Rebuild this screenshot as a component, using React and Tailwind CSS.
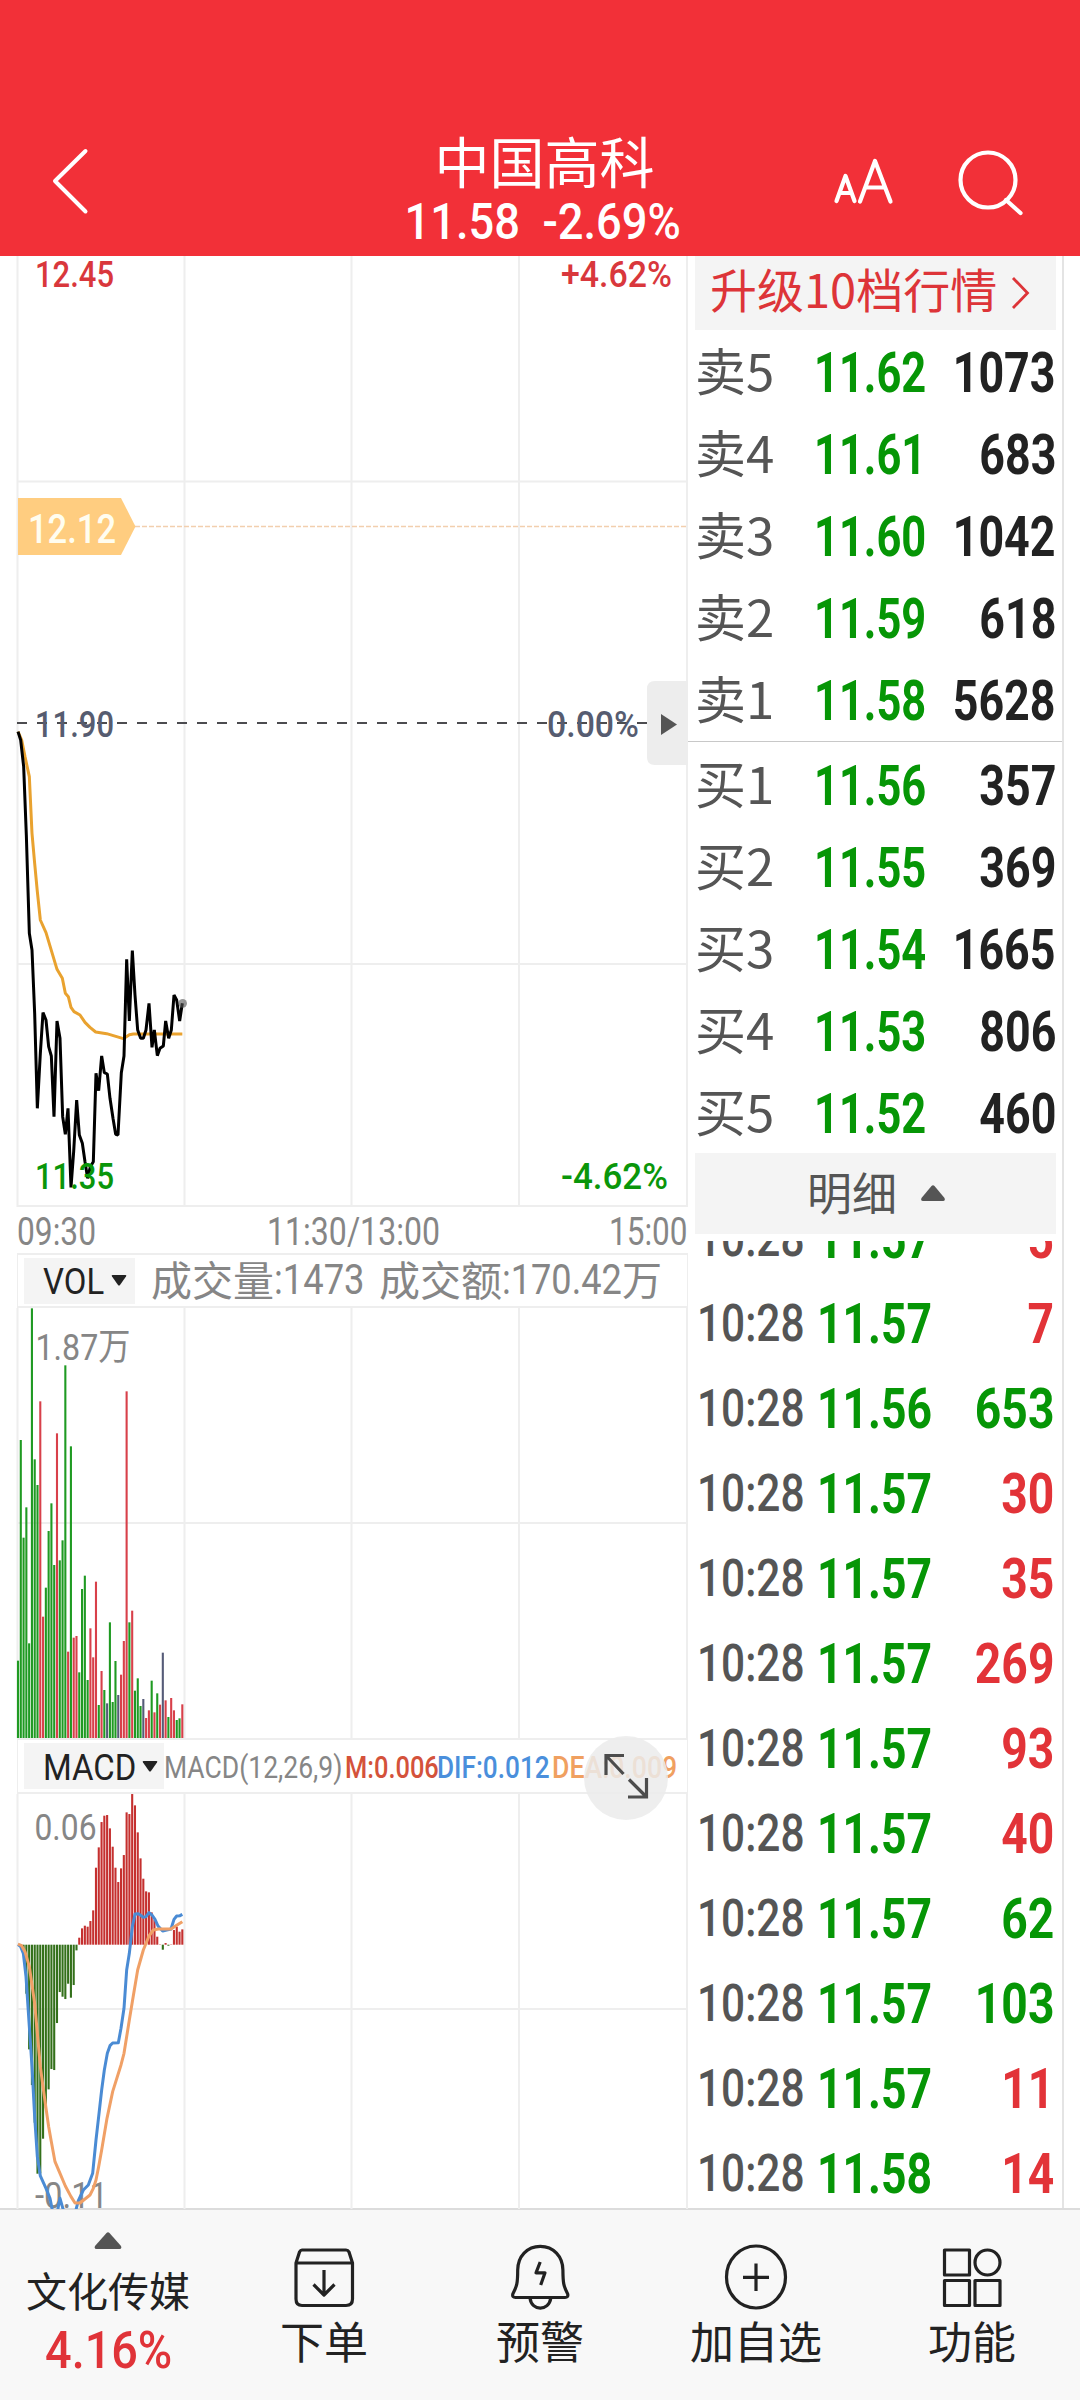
import React from "react";
import clsx from "clsx";

const asks = [
  ["卖5", "11.62", "1073"],
  ["卖4", "11.61", "683"],
  ["卖3", "11.60", "1042"],
  ["卖2", "11.59", "618"],
  ["卖1", "11.58", "5628"],
];

const bids = [
  ["买1", "11.56", "357"],
  ["买2", "11.55", "369"],
  ["买3", "11.54", "1665"],
  ["买4", "11.53", "806"],
  ["买5", "11.52", "460"],
];

const trades = [
  ["10:28", "11.57", "5", "up"],
  ["10:28", "11.57", "7", "up"],
  ["10:28", "11.56", "653", "down"],
  ["10:28", "11.57", "30", "up"],
  ["10:28", "11.57", "35", "up"],
  ["10:28", "11.57", "269", "up"],
  ["10:28", "11.57", "93", "up"],
  ["10:28", "11.57", "40", "up"],
  ["10:28", "11.57", "62", "down"],
  ["10:28", "11.57", "103", "down"],
  ["10:28", "11.57", "11", "up"],
  ["10:28", "11.58", "14", "up"],
];

// one entry per minute, chart units are 1/3 px
const volumes = [
  232, 894, 601, 692, 284, 1289, 836, 759, 1010, 364, 451, 621, 704, 519, 914, 533, 593, 1118, 259, 875,
  301, 306, 197, 447, 487, 174, 329, 242, 469, 99, 201, 144, 104, 347, 108, 231, 129, 190, 291, 1040,
  347, 382, 142, 179, 96, 117, 60, 83, 172, 77, 134, 100, 256, 113, 63, 120, 83, 54, 59, 101,
];
const volumeSides = "ggggggggrrggggrgggrgrrggggrrrgrgbgggbrrrgrgggbrrgrgrbrgrrggr";

const macd = [
  0, -4, -26, -147, -314, -421, -534, -687, -686, -582, -491, -434, -373, -376, -235, -142, -156, -163, -117, -159,
  -121, -17, 21, 49, 57, 54, 71, 103, 231, 292, 368, 387, 389, 349, 294, 231, 188, 229, 269, 397,
  392, 452, 418, 337, 259, 198, 160, 157, 97, 74, 24, 1, -15, 5, -3, 1, 44, 54, 39, 46,
];

const priceLine =
  "54,95 62,120 71,200 79,405 88,700 96,750 104,940 112,1225 121,1060 129,938 138,960 146,1040 154,1068 162,1250 171,963 180,1015 188,1250 196,1303 204,1225 213,1462 221,1355 230,1200 238,1305 247,1330 255,1385 263,1435 271,1400 280,1385 288,1120 296,1172 305,1068 313,1118 322,1122 330,1195 339,1255 347,1303 354,1305 364,1118 372,1068 380,778 388,963 397,752 405,885 413,990 422,1015 430,1015 438,990 447,910 456,1042 463,990 472,1067 480,1045 490,1038 497,963 506,1015 514,990 522,885 530,900 539,963 547,910";
const averageLine =
  "54,95 65,120 75,170 88,230 96,400 104,490 112,575 121,660 138,698 171,808 187,835 196,880 205,890 213,922 222,935 240,945 255,967 270,982 287,996 320,1001 370,1016 388,1004 400,1002 547,1002";
const difLine =
  "54,494 62,500 70,520 78,590 88,740 96,860 104,1010 112,1130 121,1188 138,1225 150,1255 157,1290 165,1340 175,1280 180,1255 190,1290 200,1360 220,1330 229,1285 235,1262 250,1230 265,1215 278,1180 288,1080 296,1010 305,930 313,870 322,820 330,797 338,789 355,788 363,745 372,685 380,570 388,520 397,440 405,402 415,401 430,412 438,410 447,398 456,405 465,418 474,438 488,453 500,450 513,447 522,418 530,408 540,407 547,403";
const deaLine =
  "54,492 65,497 75,515 88,560 104,670 121,860 129,920 138,985 146,1040 154,1085 165,1145 180,1180 196,1218 213,1250 225,1269 240,1269 255,1257 270,1245 280,1225 288,1200 296,1160 305,1110 321,1015 338,935 363,855 372,820 388,720 397,665 413,570 430,510 447,468 460,450 475,447 513,447 530,436 547,425";

const sideColor = { g: "#1f9a22", r: "#d8404a", b: "#565c78" };

// Condensed figures
const Num = ({ className, children }) => (
  <span className={clsx("inline-block whitespace-pre font-[Roboto,sans-serif] leading-none", className)}>{children}</span>
);

// Chart label squeezed to the given width
const Label = ({ x, y, w, size = 36, weight = 500, fill, children }) => (
  <text
    x={x}
    y={y}
    fontSize={size}
    fontWeight={weight}
    fill={fill}
    textLength={w}
    lengthAdjust="spacingAndGlyphs"
    fontFamily="Roboto, 'Noto Sans CJK SC', sans-serif"
  >
    {children}
  </text>
);

const Grid = ({ height, rows }) => (
  <g stroke="#eeeeee" strokeWidth="2">
    {[17.5, 184.5, 351.5, 519, 687].map((x) => (
      <path key={x} d={`M${x} 0V${height}`} />
    ))}
    {rows.map((y) => (
      <path key={y} d={`M17 ${y}H688`} />
    ))}
  </g>
);

const Header = () => (
  <header className="grid h-[256px] shrink-0 grid-cols-[1fr_auto_1fr] bg-[#f23038] pt-[128px] text-white">
    <svg className="mt-[14px] ml-[44px] h-[78px] w-[52px]" viewBox="44 142 52 78" fill="none" stroke="#fff" strokeWidth="4" strokeLinecap="round" strokeLinejoin="round">
      <path d="M85.500 151L55 181L85.500 211.500" />
    </svg>
    <div className="flex w-[300px] flex-col items-center">
      <h1 className="-mt-[4px] ml-[9px] font-['Noto_Sans_CJK_SC',sans-serif] text-[55px] leading-[70px]">中国高科</h1>
      <Num className="mt-[3px] ml-[6px] scale-x-[0.905] text-[50px] font-medium">{"11.58  -2.69%"}</Num>
    </div>
    <svg className="mt-[14px] ml-[130px] h-[78px] w-[220px]" viewBox="820 142 220 78" fill="none" stroke="#fff" strokeWidth="4.2" strokeLinecap="round" strokeLinejoin="round">
      <path d="M836.500 201L845.500 176L854.500 201M839.500 193H851.500" />
      <path d="M860 201.500L875 161L890.500 201.500M865.500 187.500H884.500" />
      <circle cx="988" cy="180" r="27.500" />
      <path d="M1006 200L1020.500 213" />
    </svg>
  </header>
);

const PriceChart = () => (
  <svg className="block h-[997px] w-[688px]" viewBox="0 256 688 997">
    <g transform="translate(0 256)">
      <Grid height={951} rows={[225.5, 708, 950]} />
    </g>
    <path d="M135 526.500H688" stroke="#f2cfae" strokeWidth="1.500" strokeDasharray="5 2" />
    <path d="M18 498H121L135.500 526.500L121 555H18Z" fill="#ffcd80" />
    <Label x={28} y={542.5} w={88} size={40} fill="#fffdf0">12.12</Label>
    <path d="M17 723H688" stroke="#4c4c50" strokeWidth="2" strokeDasharray="10 10" />
    <g transform="translate(0 700) scale(0.33333)" fill="none" strokeWidth="9" strokeLinejoin="bevel">
      <polyline points={averageLine} stroke="#e9a22f" />
      <polyline points={priceLine} stroke="#000" />
      <circle cx="548" cy="910" r="13" fill="#555" fillOpacity="0.6" />
    </g>
    <Label x={35} y={286.5} w={79} fill="#d9373c">12.45</Label>
    <Label x={561} y={286.5} w={111} fill="#d9373c">+4.62%</Label>
    <Label x={35} y={737} w={79} fill="#565c70">11.90</Label>
    <Label x={547} y={737} w={92} fill="#565c70">0.00%</Label>
    <Label x={35} y={1188.5} w={79} fill="#0a960a">11.35</Label>
    <Label x={561} y={1188.5} w={107} fill="#0a960a">-4.62%</Label>
    <path d="M688 681H655Q647 681 647 689V757Q647 765 655 765H688Z" fill="#ededed" />
    <path d="M661 714L677 724.500L661 735Z" fill="#555" />
    <Label x={17} y={1245} w={79} size={38} weight={400} fill="#868686">09:30</Label>
    <Label x={267} y={1245} w={173} size={38} weight={400} fill="#868686">11:30/13:00</Label>
    <Label x={609} y={1245} w={78.5} size={38} weight={400} fill="#868686">15:00</Label>
  </svg>
);

const IndicatorButton = ({ className, label, labelClass }) => (
  <button className={clsx("ml-[6px] flex h-[46px] shrink-0 items-center bg-[#f4f4f4] text-[#222]", className)}>
    <Num className={clsx("mt-[2px] origin-left scale-x-[0.89] text-[37px]", labelClass)}>{label}</Num>
    <svg className="h-[11px] w-[16px]" viewBox="0 0 16 11">
      <path d="M1.500 0H14.500Q16 0 15 1.500L9 10Q8 11 7 10L1 1.500Q0 0 1.500 0Z" fill="#222" />
    </svg>
  </button>
);

const VolumePanel = () => (
  <section>
    <div className="ml-[17px] flex h-[55px] w-[671px] items-center border-x-[1.5px] border-y-2 border-[#eeeeee] text-[#868686]">
      <IndicatorButton className="w-[111px] pl-[19px]" label="VOL" labelClass="w-[68px]" />
      <div className="-mt-[5px] ml-[16px] flex items-center font-['Noto_Sans_CJK_SC',sans-serif] text-[41px] leading-[50px]">
        成交量
        <Num className="mt-[4px] w-[105px] origin-left scale-x-[0.865] text-[42px]">:1473</Num>
        成交额
        <Num className="mt-[4px] w-[120px] origin-left scale-x-[0.86] text-[42px]">:170.42</Num>
        <span className="text-[40px]">万</span>
      </div>
    </div>
    <svg className="block h-[430px] w-[688px]" viewBox="0 1308 688 430">
      <g transform="translate(0 1308)">
        <Grid height={430} rows={[215]} />
      </g>
      {volumes.map((v, i) => (
        <rect key={i} x={16.95 + i * 2.785} y={1738 - v / 3} width="2.1" height={v / 3} fill={sideColor[volumeSides[i]]} />
      ))}
      <Label x={35.5} y={1360} w={95} size={37} weight={400} fill="#868686">1.87万</Label>
    </svg>
  </section>
);

const MacdPanel = () => (
  <section className="relative">
    <div className="ml-[17px] flex h-[56px] w-[671px] items-center border-x-[1.5px] border-y-2 border-[#eeeeee] text-[31px]">
      <IndicatorButton className="w-[140px] pl-[19px]" label="MACD" labelClass="w-[99px]" />
      <Num className="mt-[2px] w-[181px] origin-left scale-x-[0.855] text-[#868686]">MACD(12,26,9)</Num>
      <Num className="mt-[2px] w-[92px] origin-left scale-x-[0.82] font-medium text-[#d4523b]">M:0.006</Num>
      <Num className="mt-[2px] w-[115px] origin-left scale-x-[0.845] font-medium text-[#4a8fdc]">DIF:0.012</Num>
      <Num className="mt-[2px] w-[120px] origin-left scale-x-[0.86] font-medium text-[#f0a060]">DEA:0.009</Num>
    </div>
    <svg className="block h-[415px] w-[688px]" viewBox="0 1794 688 415">
      <g transform="translate(0 1794)">
        <Grid height={415} rows={[215]} />
      </g>
      {macd.map((v, i) => (
        <rect
          key={i}
          x={16.95 + i * 2.785}
          y={v > 0 ? 1944.7 - v / 3 : 1944.7}
          width="2.1"
          height={Math.abs(v) / 3}
          fill={v > 0 ? "#c5302f" : "#33701a"}
        />
      ))}
      <Label x={34.5} y={1839.5} w={62} size={37} weight={400} fill="#868686">0.06</Label>
      <Label x={35} y={2207.5} w={73} size={37} weight={400} fill="#868686">-0.11</Label>
      <g transform="translate(0 1780) scale(0.33333)" fill="none" strokeWidth="9" strokeLinejoin="round">
        <polyline points={difLine} stroke="#4a8bd4" />
        <polyline points={deaLine} stroke="#f0a066" />
      </g>
    </svg>
    <button className="absolute top-[-2px] left-[584px] h-[84px] w-[84px] rounded-full bg-[#ebebeb]/85">
      <svg className="h-[84px] w-[84px]" viewBox="584 1736 84 84" fill="none" stroke="#4c4c4c" strokeWidth="3.2">
        <path d="M624 1755.500H606V1775M606 1755.500L623.500 1774" />
        <path d="M628 1797H646.500V1778M629 1779.500L646.500 1797" />
      </svg>
    </button>
  </section>
);

const BookRow = ({ row }) => {
  const [side, price, size] = row;
  return (
    <div className="flex h-[82px] items-center pr-[6px] pl-[7px]">
      <span className="-mt-[7px] w-[119px] font-['Noto_Sans_CJK_SC',sans-serif] text-[51px] leading-[64px] text-[#555]">{side}</span>
      <Num className="mt-[2px] w-[112px] origin-left scale-x-[0.775] text-[56px] font-bold text-[#069606]">{price}</Num>
      <Num className="mt-[2px] ml-auto origin-right scale-x-[0.8] text-[56px] font-bold text-[#222]">{size}</Num>
    </div>
  );
};

const OrderBook = () => (
  <aside className="flex w-[376px] flex-col overflow-hidden border-r-2 border-[#e4e4e4]">
    <button className="ml-[7px] flex h-[74px] w-[361px] shrink-0 items-center bg-[#f4f4f4] pb-[4px] pl-[15px] text-[#dd3438]">
      <span className="-mt-[7px] w-[286px] font-['Noto_Sans_CJK_SC',sans-serif] text-[47px] leading-[64px] whitespace-nowrap">升级10档行情</span>
      <svg className="mt-[3px] ml-[15px] h-[34px] w-[20px]" viewBox="0 0 20 34" fill="none" stroke="#dd3438" strokeWidth="2.8">
        <path d="M2 2L16.500 17L2 32" />
      </svg>
    </button>
    <div className="border-b border-[#c8c8c8] pt-px">
      {asks.map((row) => (
        <BookRow key={row[0]} row={row} />
      ))}
    </div>
    <div className="pt-[2px]">
      {bids.map((row) => (
        <BookRow key={row[0]} row={row} />
      ))}
    </div>
    <button className="-mt-px ml-[7px] flex h-[81px] w-[361px] shrink-0 items-center bg-[#f4f4f4] pl-[112px] text-[#555]">
      <span className="-mt-[3px] font-['Noto_Sans_CJK_SC',sans-serif] text-[45px] leading-[60px]">明细</span>
      <svg className="-mt-[2px] ml-[24px] h-[16px] w-[24px]" viewBox="0 0 24 16">
        <path d="M10.500 1Q12 -0.500 13.500 1L23.500 13Q24.500 16 22 16H2Q-0.500 16 0.500 13Z" fill="#555" />
      </svg>
    </button>
    <div className="mt-[7px] flex-1 overflow-hidden">
      <div className="-mt-[45px]">
        {trades.map(([time, price, size, side], i) => (
          <div key={i} className="flex h-[85px] items-center pr-[8px] pl-[9px]">
            <Num className="w-[120px] origin-left scale-x-[0.815] text-[52px] font-medium text-[#555]">{time}</Num>
            <Num className="w-[112px] origin-left scale-x-[0.795] text-[56px] font-bold text-[#069606]">{price}</Num>
            <Num className={clsx("ml-auto origin-right scale-x-[0.825] text-[56px] font-bold", side === "up" ? "text-[#e23338]" : "text-[#069606]")}>{size}</Num>
          </div>
        ))}
      </div>
    </div>
  </aside>
);

const NavItem = ({ label, children }) => (
  <button className="flex w-[216px] flex-col items-center pt-[31px]">
    <svg className="h-[72px] w-[72px]" viewBox="0 0 72 72" fill="none" stroke="#222" strokeWidth="3.2" strokeLinejoin="round">
      {children}
    </svg>
    <span className="-mt-[3px] text-[44px] leading-[60px]">{label}</span>
  </button>
);

const BottomBar = () => (
  <nav className="flex h-[192px] shrink-0 border-t-2 border-[#dcdcdc] bg-[#f8f8f8] font-['Noto_Sans_CJK_SC',sans-serif] text-[#222]">
    <button className="flex w-[216px] flex-col items-center pt-[22px]">
      <svg className="h-[17px] w-[28px]" viewBox="0 0 28 17">
        <path d="M12.500 1Q14 -0.500 15.500 1L27 14Q28 17 25.500 17H2.500Q0 17 1 14Z" fill="#555" />
      </svg>
      <span className="mt-[10px] text-[41px] leading-[60px]">文化传媒</span>
      <Num className="mt-[6px] ml-[2px] scale-x-[0.9] text-[52px] font-medium text-[#e03338]">4.16%</Num>
    </button>
    <NavItem label="下单">
      <path d="M14 9H58Q60 9 61 11L64.500 22V58Q64.500 64.500 58 64.500H14Q8 64.500 8 58V22L11.500 11Q12.500 9 14 9ZM8 22H64.500M36 29V54M25.500 43.500L36 54L46.500 43.500" />
    </NavItem>
    <NavItem label="预警">
      <path d="M36.300 5.300C23 5.300 13.800 15.500 13.700 29C13.700 42 13 45 8.800 53Q8 56.500 11.500 56.500H61Q64.500 56.500 63.700 53C59.500 45 59 42 58.900 29C58.800 15.500 49.500 5.300 36.300 5.300Z" />
      <path d="M26 57C27.500 70.500 45 70.500 46.800 57" />
      <path d="M36.200 21L32 31.800H41L36.700 44" />
    </NavItem>
    <NavItem label="加自选">
      <ellipse cx="36" cy="36" rx="29.500" ry="31" />
      <path d="M36 22.500V50M23 36.300H49" />
    </NavItem>
    <NavItem label="功能">
      <path d="M8.500 9H33.500V34H8.500ZM8.500 39.500H33.500V64.500H8.500ZM39 39.500H64V64.500H39Z" />
      <circle cx="51.500" cy="21.500" r="12.500" />
    </NavItem>
  </nav>
);

const App = () => (
  <div className="flex h-[2400px] w-[1080px] flex-col overflow-hidden bg-white">
    <Header />
    <main className="flex h-[1952px]">
      <div className="w-[688px] shrink-0">
        <PriceChart />
        <VolumePanel />
        <MacdPanel />
      </div>
      <OrderBook />
    </main>
    <BottomBar />
  </div>
);

export default App;
